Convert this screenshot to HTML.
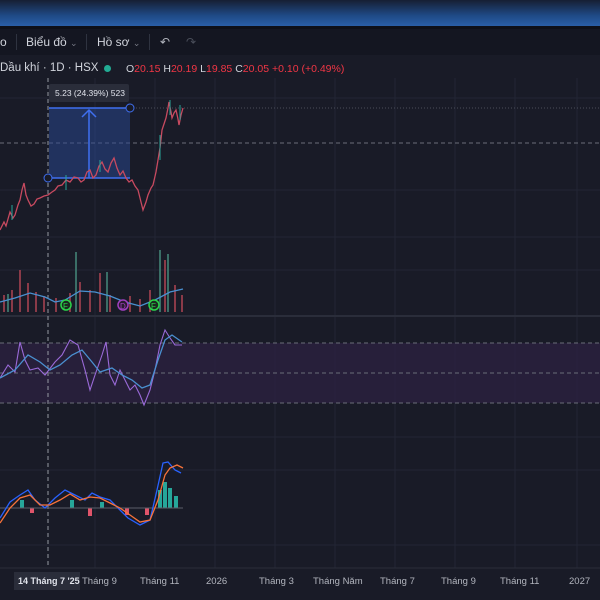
<!DOCTYPE html>
<html><head><meta charset="utf-8"><style>
body{margin:0;width:600px;height:600px;overflow:hidden;background:#191b27;font-family:"Liberation Sans","Noto Sans CJK SC",sans-serif;position:relative}
.top{position:absolute;left:0;top:0;width:600px;height:26px;background:linear-gradient(#161f33,#1f4a86 60%,#2a5fa8)}
.top2{position:absolute;left:0;top:26px;width:600px;height:3px;background:#0e1018}
.tb{position:absolute;left:0;top:29px;width:600px;height:26px;background:#141621;color:#d1d4dc;font-size:12px}
.tb span{position:absolute;top:6px}
.sep{position:absolute;top:5px;width:1px;height:16px;background:#2f3340}
.leg{position:absolute;top:62px;font-size:11.5px;color:#d1d4dc}
.ax{position:absolute;top:576px;font-size:9.5px;color:#b2b5be}
</style></head><body>
<div class="top"></div><div class="top2"></div>
<div class="tb">
<span style="left:0">o</span><div class="sep" style="left:16px"></div>
<span style="left:26px">Biểu đồ <span style="position:static;color:#787b86;font-size:9px">⌄</span></span>
<div class="sep" style="left:86px"></div>
<span style="left:97px">Hồ sơ <span style="position:static;color:#787b86;font-size:9px">⌄</span></span>
<div class="sep" style="left:149px"></div>
<span style="left:160px;color:#b2b5be">↶</span><span style="left:186px;color:#4a4e5a">↷</span>
</div>
<div class="leg" style="left:0">Dầu khí · 1D · HSX</div>
<div style="position:absolute;left:104px;top:65px;width:7px;height:7px;border-radius:50%;background:#22ab94"></div>
<div class="leg" style="left:126px;font-size:10.5px;top:63px">O<span style="color:#f23645">20.15</span> H<span style="color:#f23645">20.19</span> L<span style="color:#f23645">19.85</span> C<span style="color:#f23645">20.05 +0.10 (+0.49%)</span></div>
<svg width="600" height="600" style="position:absolute;left:0;top:0">
<g stroke="#232634" stroke-width="1">
<line x1="0" y1="98" x2="600" y2="98"/><line x1="0" y1="190" x2="600" y2="190"/><line x1="0" y1="237" x2="600" y2="237"/><line x1="0" y1="270" x2="600" y2="270"/><line x1="0" y1="437" x2="600" y2="437"/><line x1="0" y1="470" x2="600" y2="470"/><line x1="0" y1="545" x2="600" y2="545"/>
<line x1="95" y1="78" x2="95" y2="568"/><line x1="155" y1="78" x2="155" y2="568"/><line x1="215" y1="78" x2="215" y2="568"/><line x1="275" y1="78" x2="275" y2="568"/><line x1="335" y1="78" x2="335" y2="568"/><line x1="395" y1="78" x2="395" y2="568"/><line x1="455" y1="78" x2="455" y2="568"/><line x1="515" y1="78" x2="515" y2="568"/><line x1="577" y1="78" x2="577" y2="568"/>
</g>
<line x1="0" y1="316" x2="600" y2="316" stroke="#2a2d3a" stroke-width="2"/>
<line x1="0" y1="568" x2="600" y2="568" stroke="#2a2d3a"/>
<rect x="0" y="343" width="600" height="60" fill="#2a2140" opacity="0.8"/>
<g stroke="#6a6d78" stroke-dasharray="4,3" fill="none">
<line x1="0" y1="143" x2="600" y2="143"/><line x1="0" y1="343" x2="600" y2="343"/><line x1="0" y1="373" x2="600" y2="373"/><line x1="0" y1="403" x2="600" y2="403"/>
</g>
<line x1="130" y1="108" x2="600" y2="108" stroke="#4a4e5a" stroke-dasharray="1,2"/>
<line x1="48" y1="78" x2="48" y2="568" stroke="#9598a1" stroke-dasharray="4,3"/>
<rect x="49" y="108" width="81" height="70" fill="#2a4a96" opacity="0.5"/>
<line x1="49" y1="108" x2="130" y2="108" stroke="#3f6ff0" stroke-width="1.5"/>
<line x1="49" y1="178" x2="130" y2="178" stroke="#3f6ff0" stroke-width="1.5"/>
<line x1="89" y1="178" x2="89" y2="110" stroke="#3f6ff0" stroke-width="1.5"/>
<polyline points="82,117 89,110 96,117" stroke="#3f6ff0" stroke-width="1.5" fill="none"/>
<circle cx="130" cy="108" r="4" fill="#191b27" stroke="#3f6ff0"/><circle cx="48" cy="178" r="4" fill="#191b27" stroke="#3f6ff0"/>
<rect x="49" y="84" width="80" height="18" rx="2" fill="#2a2d3a"/>
<text x="55" y="96" font-size="8.5" fill="#e0e3eb" font-family="Liberation Sans">5.23 (24.39%) 523</text>
<polyline fill="none" stroke="#c84a60" stroke-width="1.3" points="0,230 4,222 6,226 10,212 13,218 15,215 18,205 20,200 22,190 24,183 26,195 28,200 31,206 34,204 37,199 40,198 44,196 48,195 52,192 55,190 58,186 62,185 66,180 70,182 74,177 78,178 81,182 84,180 87,172 90,170 93,178 96,175 99,166 102,162 105,169 108,172 111,163 114,158 117,168 120,175 123,171 126,178 129,182 132,180 135,186 138,190 141,202 143,210 146,202 148,195 151,188 153,185 156,172 158,160 160,148 162,130 164,124 166,118 168,108 169,102 171,112 172,118 174,113 176,110 178,119 179,125 181,115 183,108"/>
<g stroke="#26a69a" stroke-width="1"><line x1="66" y1="175" x2="66" y2="190"/><line x1="100" y1="160" x2="100" y2="172"/><line x1="160" y1="135" x2="160" y2="160"/><line x1="170" y1="100" x2="170" y2="115"/><line x1="180" y1="105" x2="180" y2="120"/><line x1="12" y1="205" x2="12" y2="220"/></g>
<g stroke="#8a3a48" stroke-width="2">
<line x1="4" y1="312" x2="4" y2="295"/><line x1="12" y1="312" x2="12" y2="290"/><line x1="20" y1="312" x2="20" y2="270"/><line x1="28" y1="312" x2="28" y2="283"/><line x1="36" y1="312" x2="36" y2="292"/><line x1="44" y1="312" x2="44" y2="296"/><line x1="56" y1="312" x2="56" y2="298"/><line x1="70" y1="312" x2="70" y2="293"/><line x1="80" y1="312" x2="80" y2="282"/><line x1="90" y1="312" x2="90" y2="290"/><line x1="100" y1="312" x2="100" y2="273"/><line x1="110" y1="312" x2="110" y2="295"/><line x1="130" y1="312" x2="130" y2="296"/><line x1="140" y1="312" x2="140" y2="299"/><line x1="150" y1="312" x2="150" y2="290"/><line x1="165" y1="312" x2="165" y2="260"/><line x1="175" y1="312" x2="175" y2="285"/><line x1="182" y1="312" x2="182" y2="295"/>
</g>
<g stroke="#3a6e66" stroke-width="2"><line x1="8" y1="312" x2="8" y2="294"/><line x1="76" y1="312" x2="76" y2="252"/><line x1="107" y1="312" x2="107" y2="272"/><line x1="160" y1="312" x2="160" y2="250"/><line x1="168" y1="312" x2="168" y2="254"/></g>
<polyline fill="none" stroke="#4a90d0" stroke-width="1.3" points="0,302 15,298 30,293 45,297 55,302 65,300 80,291 95,292 110,296 125,302 140,306 155,300 170,292 183,289"/>
<circle cx="66" cy="305" r="5" fill="#1b2a20" stroke="#2bd44a" stroke-width="1.5"/><text x="63" y="309" font-size="8" fill="#2bd44a">F</text>
<circle cx="123" cy="305" r="5" fill="#2a1a30" stroke="#a040c0" stroke-width="1.5"/><text x="120" y="309" font-size="8" fill="#a040c0">D</text>
<circle cx="154" cy="305" r="5" fill="#1b2a20" stroke="#2bd44a" stroke-width="1.5"/><text x="151" y="309" font-size="8" fill="#2bd44a">F</text>
<polyline fill="none" stroke="#9a6ad8" stroke-width="1.1" points="0,378 8,365 15,372 20,342 25,360 30,370 38,368 45,375 55,362 62,355 70,340 78,345 85,370 90,390 95,375 102,355 106,342 110,375 115,385 120,370 125,380 130,390 135,385 140,395 144,405 150,390 155,370 160,345 165,330 170,338 175,345 182,345"/>
<polyline fill="none" stroke="#4a90d0" stroke-width="1.3" points="0,378 15,370 28,355 40,362 50,370 60,365 72,355 82,350 92,362 100,372 112,368 122,375 132,380 142,388 150,385 158,360 165,340 172,335 182,342"/>
<g fill="#26a69a"><rect x="20" y="500" width="4" height="8"/><rect x="70" y="500" width="4" height="8"/><rect x="100" y="502" width="4" height="6"/><rect x="158" y="490" width="4" height="18"/><rect x="163" y="482" width="4" height="26"/><rect x="168" y="488" width="4" height="20"/><rect x="174" y="496" width="4" height="12"/></g>
<g fill="#e0546a"><rect x="30" y="508" width="4" height="5"/><rect x="88" y="508" width="4" height="8"/><rect x="125" y="508" width="4" height="7"/><rect x="145" y="508" width="4" height="7"/></g>
<line x1="0" y1="508" x2="183" y2="508" stroke="#5a5d68"/>
<polyline fill="none" stroke="#2962ff" stroke-width="1.3" points="0,518 10,502 20,495 28,490 35,500 45,508 55,498 65,490 75,495 85,500 92,493 100,497 110,500 120,510 128,518 140,525 150,520 157,490 163,463 168,462 175,470 181,473"/>
<polyline fill="none" stroke="#f7723a" stroke-width="1.3" points="0,523 10,508 20,498 30,495 40,505 50,505 60,500 70,494 80,500 90,497 100,498 110,503 120,508 130,515 140,522 150,520 158,500 165,475 170,468 177,465 183,468"/>
<rect x="14" y="572" width="66" height="18" fill="#2a2d3a"/>
</svg>
<div class="ax" style="left:18px;color:#e0e3eb;font-weight:bold;font-size:9px">14 Tháng 7 '25</div>
<div class="ax" style="left:82px">Tháng 9</div>
<div class="ax" style="left:140px">Tháng 11</div>
<div class="ax" style="left:206px">2026</div>
<div class="ax" style="left:259px">Tháng 3</div>
<div class="ax" style="left:313px">Tháng Năm</div>
<div class="ax" style="left:380px">Tháng 7</div>
<div class="ax" style="left:441px">Tháng 9</div>
<div class="ax" style="left:500px">Tháng 11</div>
<div class="ax" style="left:569px">2027</div>
</body></html>
